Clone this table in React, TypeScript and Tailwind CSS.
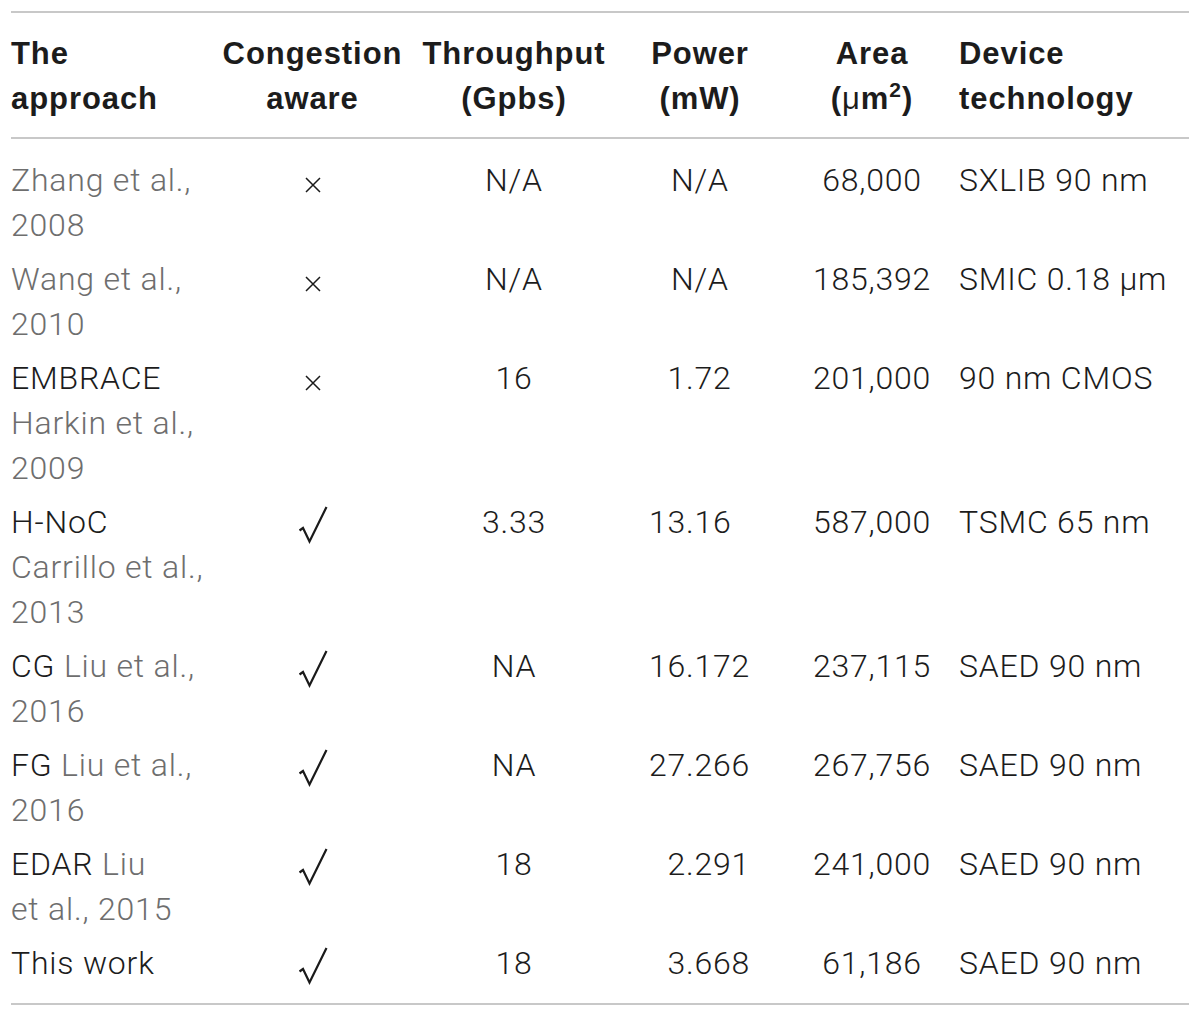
import React from 'react';

const COLS = 'grid grid-cols-[211px_181px_222px_150px_184px_1fr]';

// body text segments: dark = black label, grey = citation
type Seg = { t: string; g?: boolean };
type Row = {
  approach: Seg[][];
  aware: boolean;
  thr: string;
  power: string;
  area: string;
  tech: string;
};

const ROWS: Row[] = [
  { approach: [[{ t: 'Zhang et al.,', g: true }], [{ t: '2008', g: true }]], aware: false, thr: 'N/A', power: 'N/A', area: '68,000', tech: 'SXLIB 90 nm' },
  { approach: [[{ t: 'Wang et al.,', g: true }], [{ t: '2010', g: true }]], aware: false, thr: 'N/A', power: 'N/A', area: '185,392', tech: 'SMIC 0.18 μm' },
  { approach: [[{ t: 'EMBRACE' }], [{ t: 'Harkin et al.,', g: true }], [{ t: '2009', g: true }]], aware: false, thr: '16', power: '1.72', area: '201,000', tech: '90 nm CMOS' },
  { approach: [[{ t: 'H-NoC' }], [{ t: 'Carrillo et al.,', g: true }], [{ t: '2013', g: true }]], aware: true, thr: '3.33', power: '13.16', area: '587,000', tech: 'TSMC 65 nm' },
  { approach: [[{ t: 'CG ' }, { t: 'Liu et al.,', g: true }], [{ t: '2016', g: true }]], aware: true, thr: 'NA', power: '16.172', area: '237,115', tech: 'SAED 90 nm' },
  { approach: [[{ t: 'FG ' }, { t: 'Liu et al.,', g: true }], [{ t: '2016', g: true }]], aware: true, thr: 'NA', power: '27.266', area: '267,756', tech: 'SAED 90 nm' },
  { approach: [[{ t: 'EDAR ' }, { t: 'Liu', g: true }], [{ t: 'et al., 2015', g: true }]], aware: true, thr: '18', power: '2.291', area: '241,000', tech: 'SAED 90 nm' },
  { approach: [[{ t: 'This work' }]], aware: true, thr: '18', power: '3.668', area: '61,186', tech: 'SAED 90 nm' },
];

function Check() {
  return (
    <svg width="30" height="38" viewBox="0 0 30 38" className="mt-[6px]">
      <path d="M1.5 24.5 L5 22 L11.5 35.5 L28.5 1" fill="none" stroke="#1a1a1a" strokeWidth="2.2" strokeLinejoin="miter" />
    </svg>
  );
}

function Cross() {
  return (
    <svg width="16" height="16" viewBox="0 0 16 16" className="mt-[19px]">
      <path d="M1 1 L15 15 M15 1 L1 15" stroke="#1a1a1a" strokeWidth="1.5" />
    </svg>
  );
}

function Power({ v }: { v: string }) {
  if (!v.includes('.')) return <div className="text-center">{v}</div>;
  const [i, f] = v.split('.');
  return (
    <div className="flex">
      <span className="w-[61px] text-right">{i}</span>
      <span>.{f}</span>
    </div>
  );
}

export default function App() {
  return (
    <div className="w-[1200px] h-[1017px] bg-white px-[11px] pt-[11px] text-[#1c1c1c]">
      <div className="border-t-2 border-b-2 border-[#c8c8c8]">
        {/* header */}
        <div
          className={`${COLS} pt-[17.5px] pb-[16.5px] text-[31px] leading-[45px] font-bold tracking-[0.03em]`}
          style={{ fontFamily: '"Liberation Sans", Arial, sans-serif' }}
        >
          <div>The<br />approach</div>
          <div className="text-center">Congestion<br />aware</div>
          <div className="text-center">Throughput<br />(Gpbs)</div>
          <div className="text-center">Power<br />(mW)</div>
          <div className="text-center pl-[10px]">
            Area<br />(<span className="font-normal">μ</span>m<sup className="text-[21px] relative -top-[12px] align-baseline">2</sup>)
          </div>
          <div>Device<br />technology</div>
        </div>

        {/* body */}
        <div
          className="border-t-2 border-[#c8c8c8] pt-[14px] pb-[13px] text-[32px] leading-[45px] font-light tracking-[0.025em]"
          style={{ fontFamily: 'Roboto, "Liberation Sans", sans-serif' }}
        >
          {ROWS.map((r, idx) => (
            <div key={idx} className={`${COLS} py-[4.5px]`}>
              <div>
                {r.approach.map((line, li) => (
                  <div key={li} className="whitespace-nowrap">
                    {line.map((s, si) => (
                      <span key={si} className={s.g ? 'text-[#6e6e6e]' : ''}>{s.t}</span>
                    ))}
                  </div>
                ))}
              </div>
              <div className="flex justify-center">
                {r.aware ? <Check /> : <Cross />}
              </div>
              <div className="text-center">{r.thr}</div>
              <Power v={r.power} />
              <div className="text-center pl-[10px]">{r.area}</div>
              <div className="whitespace-nowrap">{r.tech}</div>
            </div>
          ))}
        </div>
      </div>
    </div>
  );
}
